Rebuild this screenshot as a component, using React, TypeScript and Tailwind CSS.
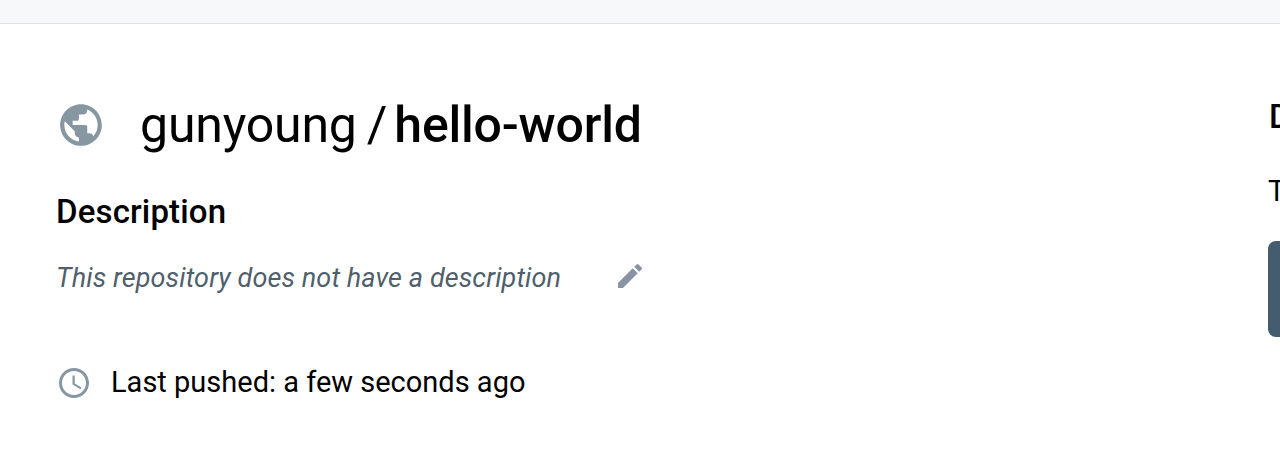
import { MdPublic, MdEdit, MdAccessTime } from "react-icons/md";

export default function App() {
  return (
    <div className="flex h-[467px] w-[1280px] flex-col overflow-hidden bg-white font-['Roboto',sans-serif] text-black">
      <header className="h-6 shrink-0 border-b border-[#e1e2e6] bg-[#f7f8fa]" />
      <div className="flex flex-1">
        <main className="w-[1268px] shrink-0 pl-[56px] pt-[72px]">
          <h1 className="flex h-[58px] items-center text-[50px] leading-[58px]">
            <MdPublic className="mr-[34px] size-[50px] text-[#8697a2]" />
            <span className="tracking-[-0.2px]">gunyoung</span>
            <span className="ml-[10px]">/</span>
            <span className="ml-[7px] font-medium tracking-[-0.2px]">hello-world</span>
          </h1>
          <h2 className="mt-[38px] text-[33px] leading-[40px] font-medium tracking-[0.15px]">Description</h2>
          <div className="mt-[25px] flex h-[40px] items-center">
            <p className="w-[558px] pt-[2px] text-[27px] tracking-[0.1px] italic text-[#505f6c]">This repository does not have a description</p>
            <MdEdit className="mb-[2px] size-[32px] text-[#8993a8]" />
          </div>
          <div className="mt-[66px] flex h-[40px] items-center gap-[19px] text-[29px]">
            <MdAccessTime className="size-[36px] text-[#8697a2]" />
            <span>Last pushed: a few seconds ago</span>
          </div>
        </main>
        <aside className="w-[440px] shrink-0 pt-[73px]">
          <h2 className="pl-px text-[33px] leading-[40px] font-medium">Docker commands</h2>
          <p className="mt-[34px] text-[29px] leading-[40px]">To push</p>
          <div className="mt-[30px] h-24 rounded-lg bg-[#445d6e]" />
        </aside>
      </div>
    </div>
  );
}
